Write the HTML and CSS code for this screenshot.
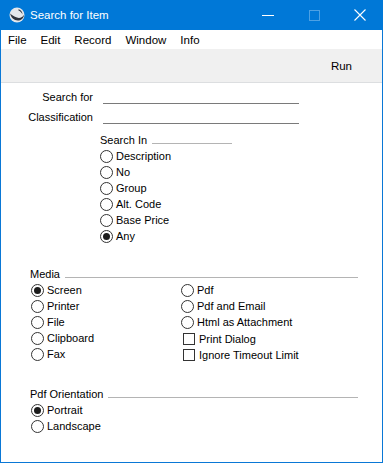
FILE: index.html
```html
<!DOCTYPE html>
<html lang="en">

<head>
  <meta charset="UTF-8">
  <title>Search for Item</title>
  <link rel="stylesheet" href="styles.css">
</head>

<body>
  <div class="window">
    <div class="titlebar">
      <svg class="logo" width="16" height="16" viewBox="0 0 16 16">
        <circle cx="8" cy="8" r="7.5" fill="#e4e7eb"/>
        <path d="M1.2 6.5 C2 11 6 14.5 11 13.2 C13.5 12.4 15 10 15.2 7.5 C14 10.5 10.5 11.5 8 10.6 C5 9.6 3 8 1.2 6.5 Z" fill="#2e333c"/>
        <path d="M9.5 2.2 C12 3 13.6 5 13.4 7.6 C12.6 5.6 11.2 4.2 9.5 3.6 Z" fill="#2e333c"/>
      </svg>
      <span class="title">Search for Item</span>
      <div class="controls">
        <span class="ctl">
          <svg width="12" height="12" viewBox="0 0 12 12"><path d="M0 6.5 H12" stroke="#fff" stroke-width="1"/></svg>
        </span>
        <span class="ctl">
          <svg width="11" height="11" viewBox="0 0 11 11"><rect x="0.5" y="0.5" width="10" height="10" fill="none" stroke="#4da1e4" stroke-width="1"/></svg>
        </span>
        <span class="ctl">
          <svg width="12" height="12" viewBox="0 0 12 12"><path d="M0.5 0.5 L11.5 11.5 M11.5 0.5 L0.5 11.5" stroke="#fff" stroke-width="1.1"/></svg>
        </span>
      </div>
    </div>

    <div class="menubar">
      <span>File</span>
      <span>Edit</span>
      <span>Record</span>
      <span>Window</span>
      <span>Info</span>
    </div>

    <div class="toolbar">
      <span class="run">Run</span>
    </div>

    <div class="content">
      <div class="fields">
        <label>Search for</label>
        <div class="field"></div>
        <label>Classification</label>
        <div class="field"></div>
      </div>

      <div class="group search-in">
        <div class="group-head"><span>Search In</span><span class="rule short"></span></div>
        <div class="opt"><span class="radio"></span>Description</div>
        <div class="opt"><span class="radio"></span>No</div>
        <div class="opt"><span class="radio"></span>Group</div>
        <div class="opt"><span class="radio"></span>Alt. Code</div>
        <div class="opt"><span class="radio"></span>Base Price</div>
        <div class="opt"><span class="radio on"></span>Any</div>
      </div>

      <div class="group media">
        <div class="group-head"><span>Media</span><span class="rule"></span></div>
        <div class="cols">
          <div class="col">
            <div class="opt"><span class="radio on"></span>Screen</div>
            <div class="opt"><span class="radio"></span>Printer</div>
            <div class="opt"><span class="radio"></span>File</div>
            <div class="opt"><span class="radio"></span>Clipboard</div>
            <div class="opt"><span class="radio"></span>Fax</div>
          </div>
          <div class="col">
            <div class="opt"><span class="radio"></span>Pdf</div>
            <div class="opt"><span class="radio"></span>Pdf and Email</div>
            <div class="opt"><span class="radio"></span>Html as Attachment</div>
            <div class="opt check first"><span class="box"></span>Print Dialog</div>
            <div class="opt check"><span class="box"></span>Ignore Timeout Limit</div>
          </div>
        </div>
      </div>

      <div class="group orient">
        <div class="group-head"><span>Pdf Orientation</span><span class="rule"></span></div>
        <div class="col">
          <div class="opt"><span class="radio on"></span>Portrait</div>
          <div class="opt"><span class="radio"></span>Landscape</div>
        </div>
      </div>
    </div>
  </div>
</body>

</html>
```

FILE: styles.css
```css
body {
  margin: 0;
  padding: 0;
  background-color: #fff;
  font-family: 'Liberation Sans', Arial, sans-serif;
  color: #000;
}

.window {
  width: 383px;
  height: 463px;
  box-sizing: border-box;
  border: 1px solid #0a78d6;
  border-top: none;
  background-color: #fff;
}

/* title bar */
.titlebar {
  height: 30px;
  margin: 0 -1px;
  background-color: #0078d7;
  display: flex;
  align-items: center;
  color: #fff;
}

.logo {
  margin-left: 9px;
  margin-right: 5px;
}

.title {
  font-size: 11.5px;
  flex: 1;
}

.controls {
  display: flex;
  height: 30px;
}

.ctl {
  width: 46px;
  height: 30px;
  display: flex;
  justify-content: center;
  align-items: center;
}

/* menu */
.menubar {
  height: 19px;
  display: flex;
  align-items: center;
  gap: 14px;
  padding-left: 7px;
  font-size: 11.5px;
}

.toolbar {
  height: 33px;
  background-color: #f0f0f0;
  border-bottom: 1px solid #dcdee0;
  display: flex;
  justify-content: flex-end;
  align-items: center;
  padding-right: 30px;
  font-size: 11.5px;
}

/* form */
.content {
  padding-top: 4px;
  font-size: 11px;
}

.fields {
  display: grid;
  grid-template-columns: 92px 196px;
  grid-auto-rows: 20px;
  column-gap: 10px;
}

.fields label {
  text-align: right;
  align-self: center;
}

.field {
  height: 16px;
  border-bottom: 1px solid #7a7a7a;
}

.group-head {
  height: 16px;
  display: flex;
  align-items: center;
}

.rule {
  flex: 1;
  height: 1px;
  margin-top: 6px;
  margin-left: 5px;
  background-color: #b4b4b4;
}

.rule.short {
  flex: none;
  width: 80px;
}

.opt {
  height: 16px;
  display: flex;
  align-items: center;
  white-space: nowrap;
}

.radio {
  width: 13px;
  height: 13px;
  box-sizing: border-box;
  border: 1px solid #333;
  border-radius: 50%;
  margin-right: 3px;
  display: flex;
  justify-content: center;
  align-items: center;
}

.radio.on::after {
  content: "";
  width: 7px;
  height: 7px;
  border-radius: 50%;
  background-color: #1c1c1c;
}

.box {
  width: 12px;
  height: 12px;
  box-sizing: border-box;
  border: 1px solid #333;
  margin-left: 2px;
  margin-right: 4px;
}

.check.first {
  margin-top: 1px;
}

.search-in {
  margin-top: 5px;
  padding-left: 99px;
}

.media {
  margin-top: 22px;
  padding-left: 29px;
  padding-right: 24px;
}

.cols {
  display: grid;
  grid-template-columns: 150px auto;
  padding-left: 1px;
}

.orient {
  margin-top: 23px;
  padding-left: 29px;
  padding-right: 24px;
}

.orient .col {
  padding-left: 1px;
}
```
